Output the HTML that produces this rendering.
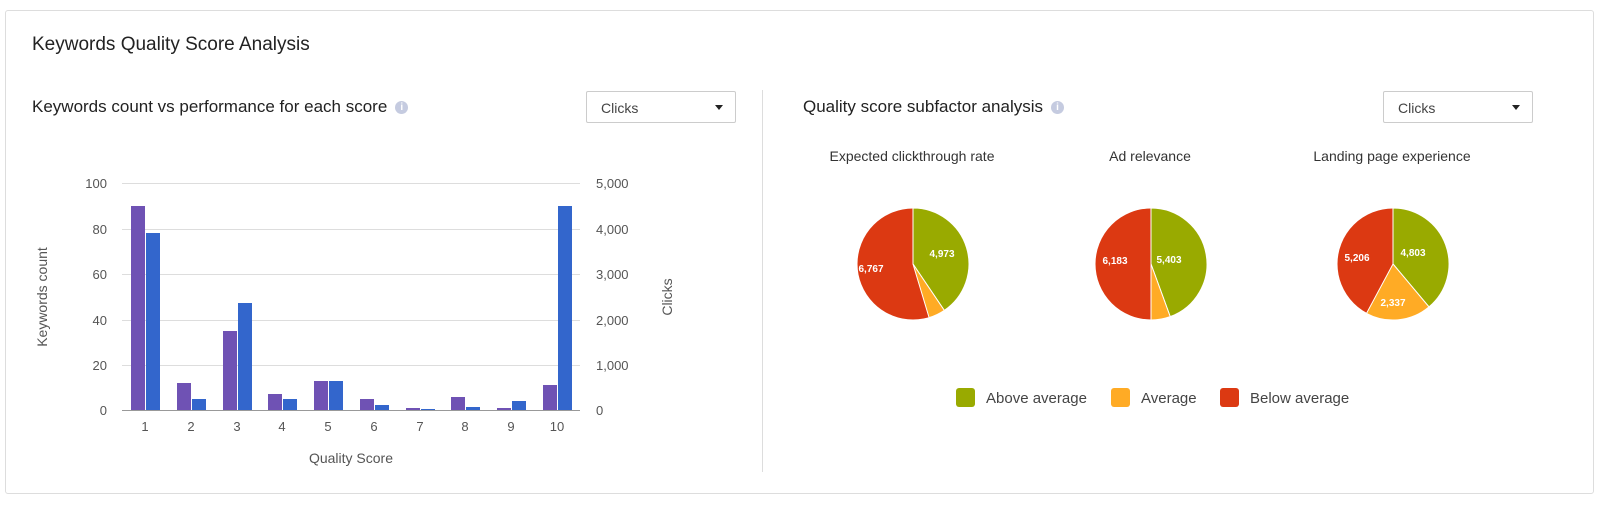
<!DOCTYPE html>
<html><head><style>
body{margin:0;background:#fff;font-family:"Liberation Sans",sans-serif;}
.card{position:absolute;left:5px;top:10px;width:1587px;height:482px;border:1px solid #ddd;border-radius:3px;}
.t{position:absolute;color:#222;white-space:nowrap}
.sel{position:absolute;width:150px;height:32px;border:1px solid #ccc;border-radius:2px;box-sizing:border-box;font-size:14px;color:#444;}
.sel span{position:absolute;left:14px;top:8px}
.sel i{position:absolute;right:12px;top:13px;border-left:4.5px solid transparent;border-right:4.5px solid transparent;border-top:5px solid #222}
.info{display:inline-block;width:13px;height:13px;border-radius:50%;background:#c5cbe0;color:#fff;font-size:10px;text-align:center;line-height:13px;font-weight:bold;vertical-align:2px;margin-left:8px}
</style></head><body>
<div class="card"></div>
<div class="t" style="left:32px;top:34px;font-size:19px">Keywords Quality Score Analysis</div>
<div class="t" style="left:32px;top:97px;font-size:17px">Keywords count vs performance for each score<span class="info">i</span></div>
<div class="sel" style="left:586px;top:91px"><span>Clicks</span><i></i></div>
<div style="position:absolute;left:762px;top:90px;width:1px;height:382px;background:#ddd"></div>
<div class="t" style="left:803px;top:97px;font-size:17px">Quality score subfactor analysis<span class="info">i</span></div>
<div class="sel" style="left:1383px;top:91px"><span>Clicks</span><i></i></div>
<svg width="1600" height="511" style="position:absolute;left:0;top:0" font-family="Liberation Sans, sans-serif">
<g stroke="#ddd" stroke-width="1">
<line x1="122" x2="580" y1="183.5" y2="183.5"/><line x1="122" x2="580" y1="229.5" y2="229.5"/><line x1="122" x2="580" y1="274.5" y2="274.5"/><line x1="122" x2="580" y1="320.5" y2="320.5"/><line x1="122" x2="580" y1="365.5" y2="365.5"/><line x1="122" x2="580" y1="410.5" y2="410.5" stroke="#999"/>
</g>
<g font-size="13" fill="#555" text-anchor="end">
<text x="107" y="188">100</text><text x="107" y="234">80</text><text x="107" y="279">60</text><text x="107" y="325">40</text><text x="107" y="370">20</text><text x="107" y="415">0</text>
</g>
<g font-size="13" fill="#555">
<text x="596" y="188">5,000</text><text x="596" y="234">4,000</text><text x="596" y="279">3,000</text><text x="596" y="325">2,000</text><text x="596" y="370">1,000</text><text x="596" y="415">0</text>
</g>
<g font-size="13" fill="#555" text-anchor="middle">
<text x="145" y="431">1</text><text x="191" y="431">2</text><text x="237" y="431">3</text><text x="282" y="431">4</text><text x="328" y="431">5</text><text x="374" y="431">6</text><text x="420" y="431">7</text><text x="465" y="431">8</text><text x="511" y="431">9</text><text x="557" y="431">10</text>
<text x="351" y="463" font-size="14">Quality Score</text>
<text transform="translate(47,297) rotate(-90)" font-size="14">Keywords count</text>
<text transform="translate(672,297) rotate(-90)" font-size="14">Clicks</text>
</g>
<g fill="#6f52b4">
<rect x="131" y="206" width="14" height="204"/><rect x="177" y="383" width="14" height="27"/><rect x="223" y="331" width="14" height="79"/><rect x="268" y="394" width="14" height="16"/><rect x="314" y="381" width="14" height="29"/><rect x="360" y="399" width="14" height="11"/><rect x="406" y="408" width="14" height="2"/><rect x="451" y="397" width="14" height="13"/><rect x="497" y="408" width="14" height="2"/><rect x="543" y="385" width="14" height="25"/>
</g>
<g fill="#3366cc">
<rect x="146" y="233" width="14" height="177"/><rect x="192" y="399" width="14" height="11"/><rect x="238" y="303" width="14" height="107"/><rect x="283" y="399" width="14" height="11"/><rect x="329" y="381" width="14" height="29"/><rect x="375" y="405" width="14" height="5"/><rect x="421" y="409" width="14" height="1"/><rect x="466" y="407" width="14" height="3"/><rect x="512" y="401" width="14" height="9"/><rect x="558" y="206" width="14" height="204"/>
</g>
<g font-size="14" fill="#333" text-anchor="middle">
<text x="912" y="161">Expected clickthrough rate</text><text x="1150" y="161">Ad relevance</text><text x="1392" y="161">Landing page experience</text>
</g>
<g stroke="#fff" stroke-width="1">
<!-- pie1 center 913,264 r56: green 0-146, avg 146-161 -->
<circle cx="913" cy="264" r="56" fill="#dc3912"/>
<path d="M913 264 L913 208 A56 56 0 0 1 944.3 310.4 Z" fill="#99aa00"/>
<path d="M913 264 L944.3 310.4 A56 56 0 0 1 929.1 317.6 Z" fill="#ffab25"/>
<circle cx="1151" cy="264" r="56" fill="#dc3912"/>
<path d="M1151 264 L1151 208 A56 56 0 0 1 1170.2 316.6 Z" fill="#99aa00"/>
<path d="M1151 264 L1170.2 316.6 A56 56 0 0 1 1151 320 Z" fill="#ffab25"/>
<circle cx="1393" cy="264" r="56" fill="#dc3912"/>
<path d="M1393 264 L1393 208 A56 56 0 0 1 1429 306.9 Z" fill="#99aa00"/>
<path d="M1393 264 L1429 306.9 A56 56 0 0 1 1366.5 313.4 Z" fill="#ffab25"/>
</g>
<g font-size="10" font-weight="bold" fill="#fff" text-anchor="middle">
<text x="942" y="257">4,973</text><text x="871" y="272">6,767</text>
<text x="1169" y="263">5,403</text><text x="1115" y="264">6,183</text>
<text x="1413" y="256">4,803</text><text x="1357" y="261">5,206</text><text x="1393" y="306">2,337</text>
</g>
<g font-size="15" fill="#444">
<rect x="956" y="388" width="19" height="19" rx="3" fill="#99aa00"/><text x="986" y="403">Above average</text>
<rect x="1111" y="388" width="19" height="19" rx="3" fill="#ffab25"/><text x="1141" y="403">Average</text>
<rect x="1220" y="388" width="19" height="19" rx="3" fill="#dc3912"/><text x="1250" y="403">Below average</text>
</g>
</svg>
</body></html>
